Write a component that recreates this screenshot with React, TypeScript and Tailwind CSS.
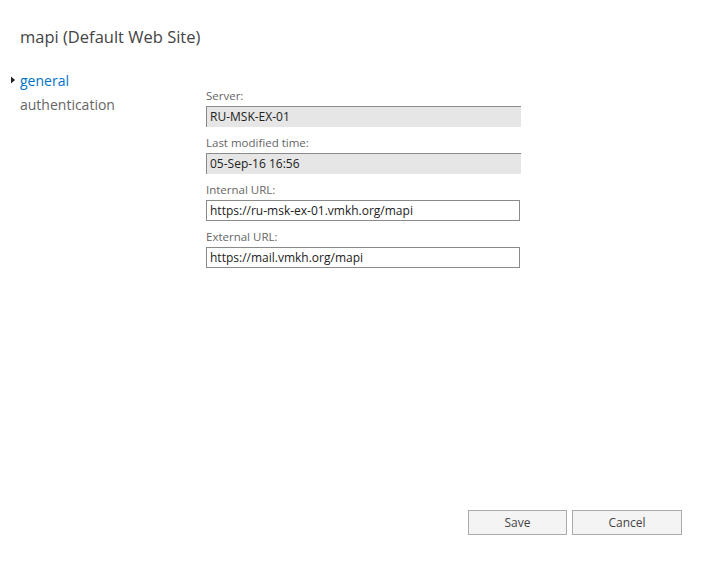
import React from 'react';

const font = { fontFamily: '"Open Sans", "Noto Sans", sans-serif' };

function Field({ label, value, readOnly }: { label: string; value: string; readOnly?: boolean }) {
  return (
    <div className="flex flex-col">
      <label className="text-[11.5px] text-[#666] leading-[14px] h-[15px] mb-[2px]">{label}</label>
      <div
        className={
          readOnly
            ? 'w-[315px] h-[21px] bg-[#e6e6e6] border-t border-l border-[#8a8a8a] pl-[3px] text-[12px] text-[#222] leading-[20px]'
            : 'w-[314px] h-[21px] bg-white border border-[#8a8a8a] pl-[3px] text-[12px] text-[#222] leading-[19px]'
        }
      >
        {value}
      </div>
    </div>
  );
}

export default function App() {
  return (
    <div className="w-[714px] h-[568px] bg-white relative overflow-hidden" style={font}>
      <div className="pl-[20px] pt-[26px] text-[16.5px] text-[#444] leading-[22px]">mapi (Default Web Site)</div>

      <div className="flex mt-[20px]">
        <div className="w-[206px] flex flex-col">
          <div className="flex items-center h-[24px]">
            <svg width="10" height="10" viewBox="0 0 10 10" className="ml-[8px] mr-[2px]">
              <path d="M3 1.5 L7 5 L3 8.5 Z" fill="#222" />
            </svg>
            <span className="text-[14px] text-[#0072c6]">general</span>
          </div>
          <div className="pl-[20px] h-[24px] flex items-center text-[14px] text-[#666]">authentication</div>
        </div>

        <div className="flex flex-col gap-[9px] pt-[21px]">
          <Field label="Server:" value="RU-MSK-EX-01" readOnly />
          <Field label="Last modified time:" value="05-Sep-16 16:56" readOnly />
          <Field label="Internal URL:" value="https://ru-msk-ex-01.vmkh.org/mapi" />
          <Field label="External URL:" value="https://mail.vmkh.org/mapi" />
        </div>
      </div>

      <div className="absolute left-[468px] top-[510px] flex gap-[5px]">
        <button className="w-[99px] h-[25px] bg-[#f4f4f4] border border-[#ababab] text-[12px] text-[#444]">Save</button>
        <button className="w-[110px] h-[25px] bg-[#f4f4f4] border border-[#ababab] text-[12px] text-[#444]">Cancel</button>
      </div>
    </div>
  );
}
